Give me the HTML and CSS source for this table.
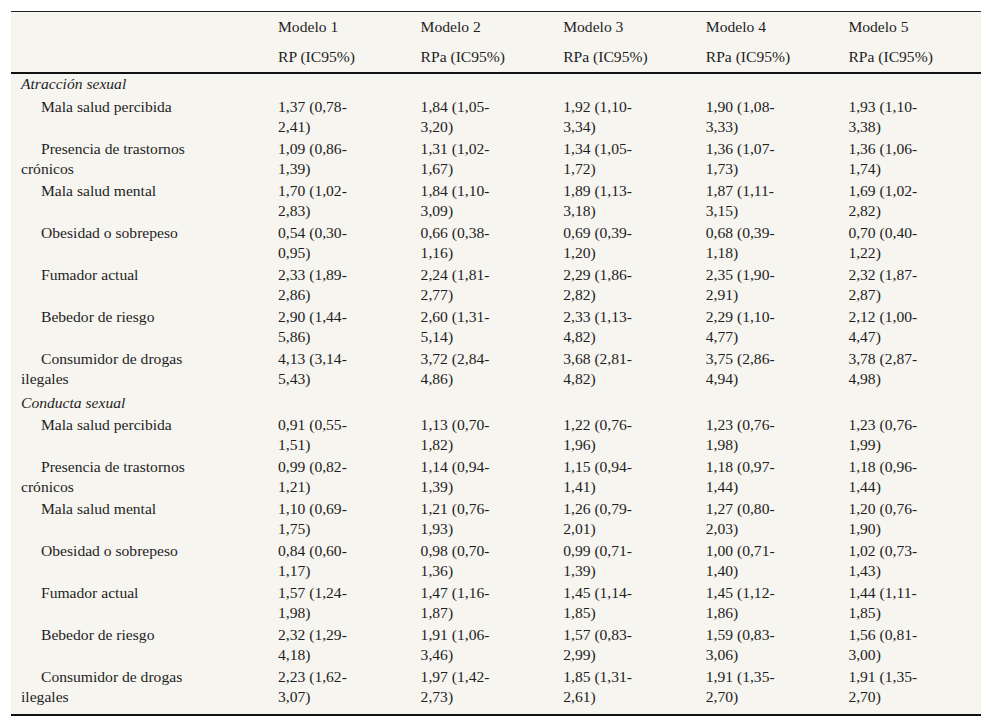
FILE: index.html
```html
<!DOCTYPE html>
<html lang="es">
<head>
<meta charset="utf-8">
<title>Tabla</title>
<link rel="stylesheet" href="styles.css">
</head>
<body>
<table class="results">
  <colgroup>
    <col class="col-label">
    <col><col><col><col><col>
  </colgroup>
  <thead>
    <tr class="head-top">
      <th></th>
      <th>Modelo 1</th>
      <th>Modelo 2</th>
      <th>Modelo 3</th>
      <th>Modelo 4</th>
      <th>Modelo 5</th>
    </tr>
    <tr class="head-bottom">
      <th></th>
      <th>RP (IC95%)</th>
      <th>RPa (IC95%)</th>
      <th>RPa (IC95%)</th>
      <th>RPa (IC95%)</th>
      <th>RPa (IC95%)</th>
    </tr>
  </thead>
  <tbody>
    <tr class="section first-section"><td colspan="6">Atracción sexual</td></tr>
    <tr><td class="label">Mala salud percibida</td><td>1,37 (0,78-2,41)</td><td>1,84 (1,05-3,20)</td><td>1,92 (1,10-3,34)</td><td>1,90 (1,08-3,33)</td><td>1,93 (1,10-3,38)</td></tr>
    <tr><td class="label">Presencia de trastornos crónicos</td><td>1,09 (0,86-1,39)</td><td>1,31 (1,02-1,67)</td><td>1,34 (1,05-1,72)</td><td>1,36 (1,07-1,73)</td><td>1,36 (1,06-1,74)</td></tr>
    <tr><td class="label">Mala salud mental</td><td>1,70 (1,02-2,83)</td><td>1,84 (1,10-3,09)</td><td>1,89 (1,13-3,18)</td><td>1,87 (1,11-3,15)</td><td>1,69 (1,02-2,82)</td></tr>
    <tr><td class="label">Obesidad o sobrepeso</td><td>0,54 (0,30-0,95)</td><td>0,66 (0,38-1,16)</td><td>0,69 (0,39-1,20)</td><td>0,68 (0,39-1,18)</td><td>0,70 (0,40-1,22)</td></tr>
    <tr><td class="label">Fumador actual</td><td>2,33 (1,89-2,86)</td><td>2,24 (1,81-2,77)</td><td>2,29 (1,86-2,82)</td><td>2,35 (1,90-2,91)</td><td>2,32 (1,87-2,87)</td></tr>
    <tr><td class="label">Bebedor de riesgo</td><td>2,90 (1,44-5,86)</td><td>2,60 (1,31-5,14)</td><td>2,33 (1,13-4,82)</td><td>2,29 (1,10-4,77)</td><td>2,12 (1,00-4,47)</td></tr>
    <tr><td class="label">Consumidor de drogas ilegales</td><td>4,13 (3,14-5,43)</td><td>3,72 (2,84-4,86)</td><td>3,68 (2,81-4,82)</td><td>3,75 (2,86-4,94)</td><td>3,78 (2,87-4,98)</td></tr>
    <tr class="section second-section"><td colspan="6">Conducta sexual</td></tr>
    <tr><td class="label">Mala salud percibida</td><td>0,91 (0,55-1,51)</td><td>1,13 (0,70-1,82)</td><td>1,22 (0,76-1,96)</td><td>1,23 (0,76-1,98)</td><td>1,23 (0,76-1,99)</td></tr>
    <tr><td class="label">Presencia de trastornos crónicos</td><td>0,99 (0,82-1,21)</td><td>1,14 (0,94-1,39)</td><td>1,15 (0,94-1,41)</td><td>1,18 (0,97-1,44)</td><td>1,18 (0,96-1,44)</td></tr>
    <tr><td class="label">Mala salud mental</td><td>1,10 (0,69-1,75)</td><td>1,21 (0,76-1,93)</td><td>1,26 (0,79-2,01)</td><td>1,27 (0,80-2,03)</td><td>1,20 (0,76-1,90)</td></tr>
    <tr><td class="label">Obesidad o sobrepeso</td><td>0,84 (0,60-1,17)</td><td>0,98 (0,70-1,36)</td><td>0,99 (0,71-1,39)</td><td>1,00 (0,71-1,40)</td><td>1,02 (0,73-1,43)</td></tr>
    <tr><td class="label">Fumador actual</td><td>1,57 (1,24-1,98)</td><td>1,47 (1,16-1,87)</td><td>1,45 (1,14-1,85)</td><td>1,45 (1,12-1,86)</td><td>1,44 (1,11-1,85)</td></tr>
    <tr><td class="label">Bebedor de riesgo</td><td>2,32 (1,29-4,18)</td><td>1,91 (1,06-3,46)</td><td>1,57 (0,83-2,99)</td><td>1,59 (0,83-3,06)</td><td>1,56 (0,81-3,00)</td></tr>
    <tr class="last-row"><td class="label">Consumidor de drogas ilegales</td><td>2,23 (1,62-3,07)</td><td>1,97 (1,42-2,73)</td><td>1,85 (1,31-2,61)</td><td>1,91 (1,35-2,70)</td><td>1,91 (1,35-2,70)</td></tr>
  </tbody>
</table>
</body>
</html>
```
FILE: styles.css
```css
html, body {
  margin: 0;
  padding: 0;
  background: #ffffff;
}

body {
  padding: 11px 11px;
  font-family: "Liberation Serif", "Times New Roman", Times, serif;
  font-size: 15.6px;
  line-height: 20px;
  color: #1e1e1e;
}

.results {
  width: 970px;
  table-layout: fixed;
  border-collapse: collapse;
  background: #f7f5f0;
  border-top: 1px solid #222;
  border-bottom: 2px solid #111;
}

.col-label {
  width: 257px;
}

.results th {
  font-weight: normal;
  text-align: left;
  vertical-align: top;
  white-space: nowrap;
  padding: 5px 20px 5px 10px;
}

.head-bottom th {
  border-bottom: 2px solid #111;
}

.results td {
  text-align: left;
  vertical-align: top;
  padding: 1px 40px 1px 10px;
}

.results td.label {
  padding-right: 60px;
  text-indent: 20px;
}

.section td {
  font-style: italic;
}

.first-section td {
  padding-top: 0;
  padding-bottom: 2px;
}

.second-section td {
  padding-top: 3px;
  padding-bottom: 1px;
}

.last-row td {
  padding-bottom: 7px;
}
```
